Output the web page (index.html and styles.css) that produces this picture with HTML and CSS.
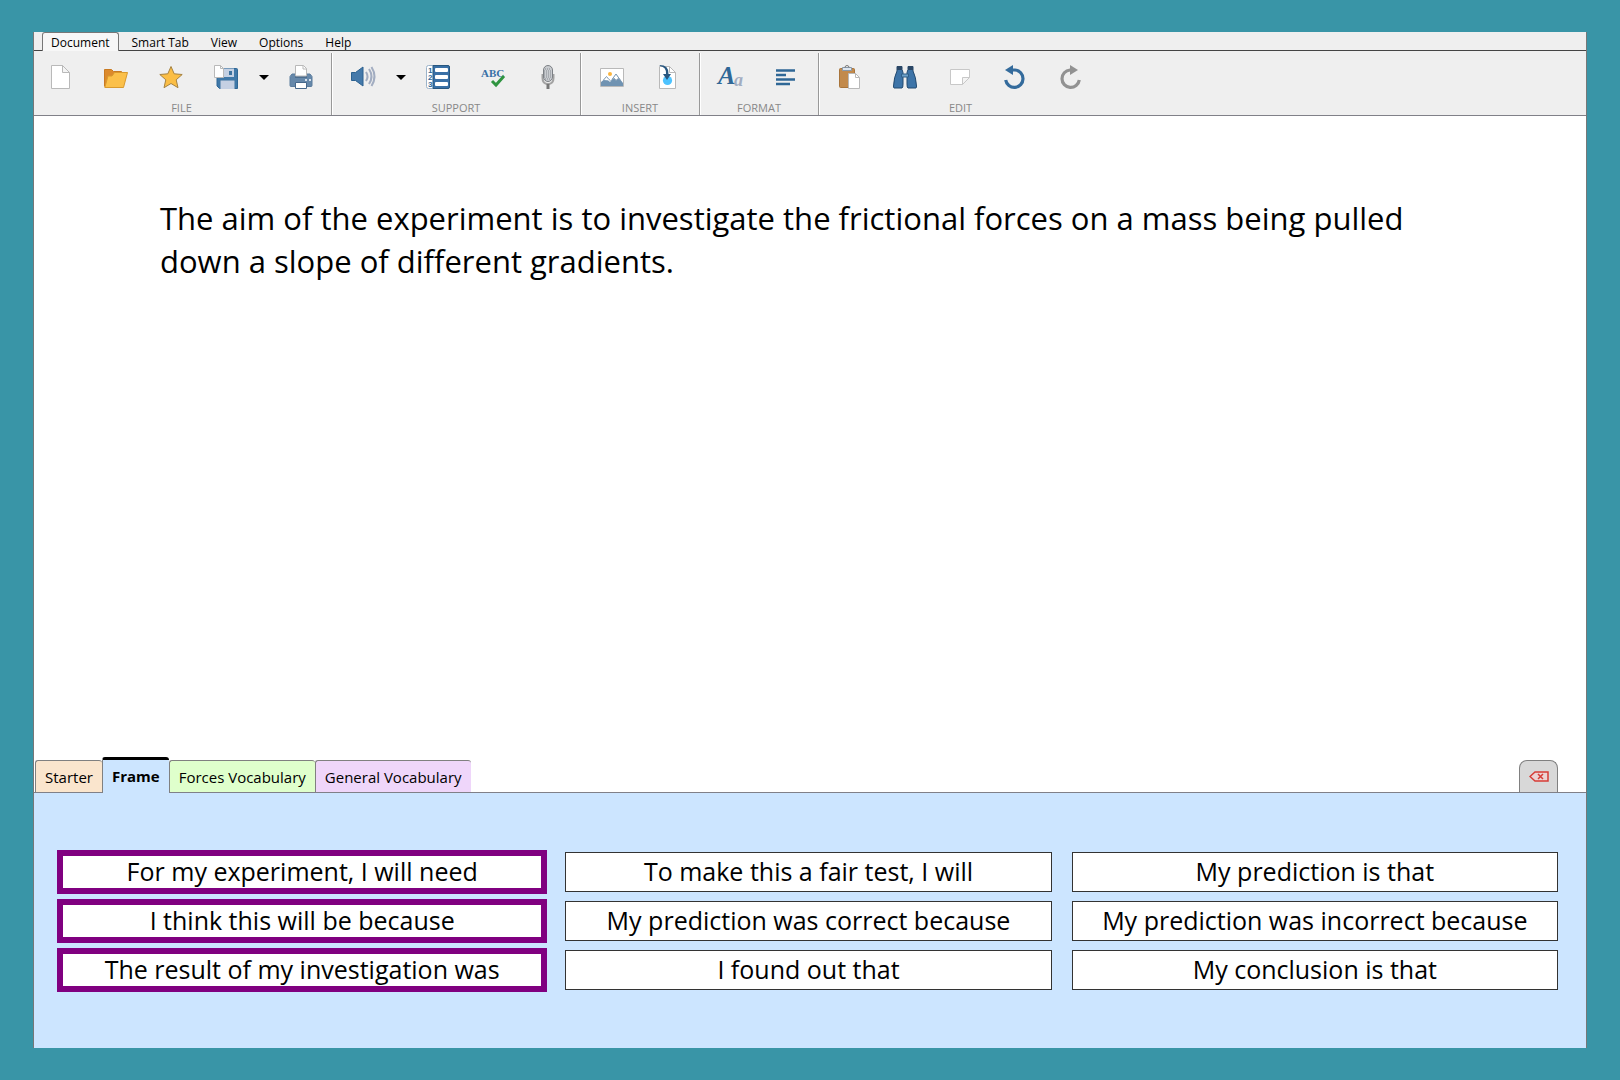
FILE: index.html
```html
<!DOCTYPE html>
<html lang="en">
<head>
    <meta charset="UTF-8">
    <meta name="viewport" content="width=device-width, initial-scale=1.0">
    <title>Document - Frame</title>
    <link rel="stylesheet" href="styles.css">
</head>
<body>
    <div class="app">
        <nav class="menu">
            <button class="active">Document</button>
            <button>Smart Tab</button>
            <button>View</button>
            <button>Options</button>
            <button>Help</button>
        </nav>

        <div class="toolbar">
            <div class="group">
                <div class="tools">
                    <button class="tool" aria-label="New">
                        <svg viewBox="0 0 24 24"><path d="M2.5.5h11l7 7v16h-18z" fill="#fff" stroke="#b9b9b9"/><path d="M13.5.5v7h7z" fill="#f4f4f4" stroke="#b9b9b9"/></svg>
                    </button>
                    <button class="tool" aria-label="Open">
                        <svg viewBox="0 0 24 24"><path d="M.5 21V4.5h7l2 2h8V10H22L18 22.5H2z" fill="#dc8a2c" stroke="#c97a22"/><path d="M.8 22.5 4 11h4l2.5-3.5h13l-4 15z" fill="#fbc04a" stroke="#d99a2e"/></svg>
                    </button>
                    <button class="tool" aria-label="Favourites">
                        <svg viewBox="0 0 24 24"><path d="m12 1.5 3.2 7.3 8 .7-6 5.3 1.8 7.9-7-4.2-7 4.2 1.8-7.9-6-5.3 8-.7z" fill="#fbbe45" stroke="#a58242"/></svg>
                    </button>
                    <button class="tool" aria-label="Save">
                        <svg viewBox="0 0 24 24"><path d="M3 3.5h19.5q1 0 1 1v19h-18L3 21z" fill="#3f78a8" stroke="#2f6796"/><path d="M10 3.5h10V12H10z" fill="#c3d0e3"/><path d="M15 6h3v4h-3zM6 15h15v9H6z" fill="#3c729f"/><path d="M6.5 15.5h14V24h-14z" fill="#c5d0e3"/><path d="M.5.5h6l3 3v9h-9z" fill="#fff" stroke="#b9b9b9"/><path d="M6.5.5v3h3" fill="none" stroke="#b9b9b9"/></svg>
                    </button>
                    <button class="drop" aria-label="Save options"><svg viewBox="0 0 10 5"><path d="M0 0h10L5 5z"/></svg></button>
                    <button class="tool" aria-label="Print">
                        <svg viewBox="0 0 24 24"><path d="M3 9h18l2 2.5v9q0 1-1 1H2q-1 0-1-1v-9z" fill="#6688aa" stroke="#5b7c9d"/><path d="M6 8h12v5H6z" fill="#4c6d8e"/><path d="M6.5.5h8l3 3V11h-11z" fill="#fff" stroke="#b9b9b9"/><path d="M14 .5V4h3.5" fill="none" stroke="#b9b9b9"/><path d="M6.5 17.5h11v6h-11z" fill="#fff" stroke="#46678a"/><path d="M16 14h2v2h-2zM20 14h2v2h-2z" fill="#d7e1ed"/></svg>
                    </button>
                </div>
                <span class="label">FILE</span>
            </div>

            <div class="group">
                <div class="tools">
                    <button class="tool" aria-label="Speak">
                        <svg viewBox="0 0 24 24"><path d="M.5 7.5h4L12 2v19l-7.5-5.500h-4z" fill="#4479aa" stroke="#2b6190"/><path d="M15 7q3 4.5 0 9M18 4q5 7.5 0 15M20.5 2q6 9.5 0 19" fill="none" stroke="#a2adc1" stroke-width="2"/></svg>
                    </button>
                    <button class="drop" aria-label="Speech options"><svg viewBox="0 0 10 5"><path d="M0 0h10L5 5z"/></svg></button>
                    <button class="tool" aria-label="Word lists">
                        <svg viewBox="0 0 24 24"><rect x=".5" y=".5" width="23" height="23" rx="2" fill="#fff" stroke="#9bb3ca"/><path d="M7 .5h15q1.5 0 1.5 1.5v20q0 1.5-1.5 1.5H7z" fill="#3970a6" stroke="#28577f"/><g fill="#fff"><rect x="9" y="3" width="13" height="4" rx="1"/><rect x="9" y="10" width="13" height="4" rx="1"/><rect x="9" y="17" width="13" height="4" rx="1"/></g><g class="digits"><text x="2" y="8">1</text><text x="2" y="15">2</text><text x="2" y="22">3</text></g></svg>
                    </button>
                    <button class="tool" aria-label="Spelling">
                        <svg viewBox="0 0 24 24"><text class="abc" x="0" y="12">ABC</text><path d="m11 16 4 4 8-9" fill="none" stroke="#2f9440" stroke-width="3"/></svg>
                    </button>
                    <button class="tool" aria-label="Dictate">
                        <svg viewBox="0 0 24 24"><path d="M6.5 9v4q0 6 5.5 6t5.5-6V9M12 19v5" fill="none" stroke="#a3a3a3" stroke-width="2"/><path d="M10.5 19h3v5h-3z" fill="#777"/><rect x="7.5" y=".5" width="9" height="16" rx="4.5" fill="#c9ccd0" stroke="#7c8085"/><path d="M9 4h6M8 6h8M8 8h8M8 10h8M8 12h8M9 14h6" stroke="#858a90" stroke-dasharray="1 1"/></svg>
                    </button>
                </div>
                <span class="label">SUPPORT</span>
            </div>

            <div class="group">
                <div class="tools">
                    <button class="tool" aria-label="Picture">
                        <svg viewBox="0 0 24 24"><path d="M.5 3.5h23v18H.5z" fill="#fff" stroke="#b9b9b9"/><circle cx="10" cy="9" r="2" fill="#fbb53f"/><path d="M1 21v-4l5-4 4 4 6-8 7 9v3z" fill="#7093b2"/><path d="m3.5 15 3-3.5 2.5 3 1.5 1M12 14.5 16 9l4.5 6.5-2.5-2-2 2-1.5-2z" fill="#fff" stroke="#7f9ab2"/></svg>
                    </button>
                    <button class="tool" aria-label="Insert file">
                        <svg viewBox="0 0 24 24"><path d="M4.5 1.5h10l6 6v16h-16z" fill="#fff" stroke="#b9b9b9"/><path d="M14.5 1.5v6h6" fill="none" stroke="#b9b9b9"/><circle cx="12.5" cy="15.5" r="4.6" fill="#4dc3ff"/><path d="M4.5 0q9.5 0 9 9H16l-4 6-4-6h3q.5-7-6-8z" fill="#285780"/></svg>
                    </button>
                </div>
                <span class="label">INSERT</span>
            </div>

            <div class="group">
                <div class="tools">
                    <button class="tool" aria-label="Font">
                        <svg viewBox="0 0 24 24"><text class="small-a" x="15" y="21">a</text><text class="big-a" x="-1" y="19">A</text></svg>
                    </button>
                    <button class="tool" aria-label="Alignment">
                        <svg viewBox="0 0 24 24"><path d="M2 5.5h19M2 10h10M2 14.5h19M2 19h14" stroke="#2f6796" stroke-width="2.6"/></svg>
                    </button>
                </div>
                <span class="label">FORMAT</span>
            </div>

            <div class="group">
                <div class="tools">
                    <button class="tool" aria-label="Paste">
                        <svg viewBox="0 0 24 24"><rect x="1.5" y="3.5" width="15" height="19" rx="1" fill="#c28a4c" stroke="#a8743b"/><path d="M4.5 2.5h9v3h-9z" fill="#dce5ee" stroke="#8a98a8"/><path d="M7 2.5a2 2 0 0 1 4 0" fill="none" stroke="#777"/><path d="M10.5 8.5h7l4 4v11h-11z" fill="#fff" stroke="#b9b9b9"/><path d="M17.5 8.5v4h4" fill="none" stroke="#b9b9b9"/></svg>
                    </button>
                    <button class="tool" aria-label="Find">
                        <svg viewBox="0 0 24 24"><path d="M4 1.5h5v3l1 3V19q0 4-1 4H1q-.5 0-.5-2Q1 12 4 6zM20 1.5h-5v3l-1 3V19q0 4 1 4h8q.5 0 .5-2Q23 12 20 6z" fill="#3d74a8" stroke="#234a70"/><path d="M4 1h5v4H4zM15 1h5v4h-5z" fill="#2a4665"/><path d="M8.5 9h7v3h-7z" fill="#6ca0c8" stroke="#2f5f88"/></svg>
                    </button>
                    <button class="tool" aria-label="Note">
                        <svg viewBox="0 0 24 24"><path d="M2.5 4.5h19v8l-7 7h-12z" fill="#fff" stroke="#c8c8c8"/><path d="M14.5 19.5v-7h7z" fill="#f4f4f4" stroke="#c8c8c8"/></svg>
                    </button>
                    <button class="tool" aria-label="Undo">
                        <svg viewBox="0 0 24 24"><path d="M7 5h5a8.7 8.7 0 1 1-9.3 10" fill="none" stroke="#346b9c" stroke-width="3.2"/><path d="M10 0v10L2 5z" fill="#346b9c"/></svg>
                    </button>
                    <button class="tool" aria-label="Redo">
                        <svg viewBox="0 0 24 24"><path d="M17 5h-5a8.7 8.7 0 1 0 9.3 10" fill="none" stroke="#929292" stroke-width="3.2"/><path d="M12 0v10l8-5z" fill="#929292"/></svg>
                    </button>
                </div>
                <span class="label">EDIT</span>
            </div>
        </div>

        <textarea class="page" aria-label="Document text" spellcheck="false">The aim of the experiment is to investigate the frictional forces on a mass being pulled down a slope of different gradients.</textarea>

        <div class="tabs">
            <button class="starter">Starter</button>
            <button class="frame">Frame</button>
            <button class="forces">Forces Vocabulary</button>
            <button class="general">General Vocabulary</button>
            <button class="backspace" aria-label="Backspace">
                <svg viewBox="0 0 20 11"><path d="M6 1h13v9H6L1 5.5z" fill="#ecd3d3" stroke="#d63c36" stroke-width="1.5"/><path d="m9 3 5 5m0-5L9 8" stroke="#d63c36" stroke-width="1.5"/></svg>
            </button>
        </div>

        <div class="phrases">
            <button class="marked">For my experiment, I will need</button>
            <button>To make this a fair test, I will</button>
            <button>My prediction is that</button>
            <button class="marked">I think this will be because</button>
            <button>My prediction was correct because</button>
            <button>My prediction was incorrect because</button>
            <button class="marked">The result of my investigation was</button>
            <button>I found out that</button>
            <button>My conclusion is that</button>
        </div>
    </div>
</body>
</html>
```
FILE: styles.css
```css
* {
    box-sizing: border-box;
}
body {
    margin: 0;
    padding: 32px 33px;
    height: 100vh;
    background-color: #3995a7;
    font-family: "Open Sans", sans-serif;
    color: black;
}
button {
    margin: 0;
    padding: 0;
    border: none;
    background: none;
    font-family: inherit;
    color: inherit;
    cursor: pointer;
}
svg {
    display: block;
}
.app {
    height: 100%;
    display: flex;
    flex-direction: column;
    border: 1px solid #777;
    border-width: 0 1px;
    background-color: white;
}
.menu {
    display: flex;
    height: 19px;
    padding-left: 8px;
    background-color: #efefef;
    border-bottom: 1px solid #444;
}
.menu button {
    height: 19px;
    padding: 2px 11px 0;
    font-size: 12px;
    line-height: 16px;
}
.menu .active {
    margin-right: 2px;
    padding: 1px 8px 0;
    border: 1px solid #777;
    border-bottom: none;
    border-radius: 3px 3px 0 0;
    background-color: #f7f7f7;
}
.toolbar {
    display: flex;
    height: 65px;
    padding-top: 2px;
    background-color: #efefef;
    border-bottom: 1px solid #808088;
}
.group {
    padding: 12px 4px 0;
    border-right: 1px solid #999;
    box-shadow: 1px 0 white;
    text-align: center;
}
.group:first-child {
    padding: 12px 2px 0 0;
}
.group:last-child {
    border: none;
    box-shadow: none;
}
.tools {
    display: flex;
    align-items: center;
}
.tool {
    width: 55px;
    padding: 0 15px;
}
.tool svg {
    width: 24px;
    height: 24px;
    overflow: visible;
}
.drop {
    width: 20px;
    padding: 0 5px;
}
.drop svg {
    width: 10px;
    height: 5px;
}
.label {
    display: block;
    margin-top: 12px;
    font-size: 11px;
    line-height: 14px;
    color: #888;
}
.digits {
    font: bold 8px "Liberation Sans", sans-serif;
    fill: #2f6796;
}
.abc {
    font: bold 11px "Liberation Serif", serif;
    fill: #3970a6;
}
.big-a {
    font: italic bold 26px "Liberation Serif", serif;
    fill: #2f6796;
}
.small-a {
    font: italic bold 18px "Liberation Serif", serif;
    fill: #a2adc1;
}
.page {
    flex: 1;
    width: 100%;
    padding: 81px 126px 0;
    border: none;
    outline: none;
    resize: none;
    background-color: white;
    font-family: "Open Sans", sans-serif;
    font-size: 31px;
    line-height: 43px;
    color: black;
}
.tabs {
    display: flex;
    align-items: flex-end;
    padding: 0 28px 0 1px;
    border-bottom: 1px solid #808088;
}
.tabs button {
    height: 32px;
    padding: 0 9px;
    border: 1px solid #808080;
    border-width: 1px 0 0 1px;
    border-radius: 3px 3px 0 0;
    font-size: 15px;
}
.tabs .starter {
    background-color: #fae5cd;
}
.tabs .frame {
    height: 36px;
    margin-bottom: -1px;
    padding-bottom: 2px;
    border-top: 3px solid black;
    background-color: #cce5ff;
    font-weight: bold;
}
.tabs .forces {
    background-color: #dfffcc;
}
.tabs .general {
    background-color: #efd6fa;
}
.tabs .backspace {
    width: 39px;
    margin-left: auto;
    border-width: 1px 1px 0;
    border-radius: 8px 8px 0 0;
    background-color: #d8d8d8;
}
.backspace svg {
    width: 20px;
    height: 11px;
}
.phrases {
    display: grid;
    grid-template-columns: repeat(3, 1fr);
    gap: 9px 20px;
    padding: 59px 28px 58px 25px;
    background-color: #cce5ff;
}
.phrases button {
    height: 40px;
    padding-bottom: 2px;
    border: 1px solid #333;
    background-color: white;
    font-size: 25px;
    line-height: 34px;
}
.phrases .marked {
    border-color: white;
    outline: 6px solid #800080;
    outline-offset: -4px;
}
```
